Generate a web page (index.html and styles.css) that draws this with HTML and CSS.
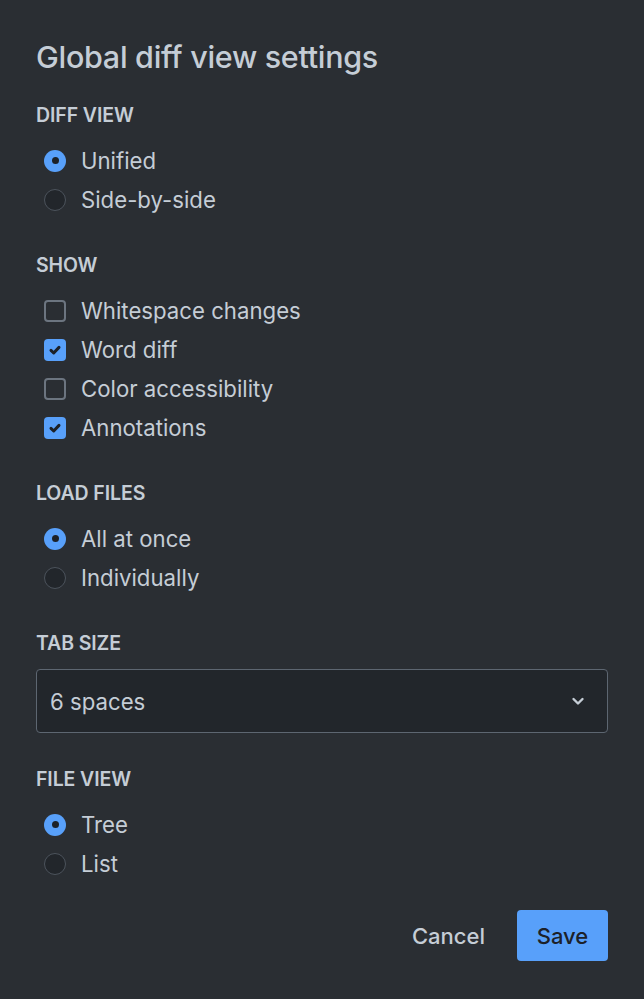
FILE: index.html
```html
<!DOCTYPE html>
<html>
<head>
<meta charset="utf-8">
<link rel="stylesheet" href="styles.css">
</head>
<body>
<div class="dialog">
  <h1 class="title">Global diff view settings</h1>

  <section class="section">
    <div class="label">DIFF VIEW</div>
    <div class="row"><span class="radio on"></span><span class="text">Unified</span></div>
    <div class="row"><span class="radio"></span><span class="text">Side-by-side</span></div>
  </section>

  <section class="section">
    <div class="label">SHOW</div>
    <div class="row"><span class="check"></span><span class="text">Whitespace changes</span></div>
    <div class="row"><span class="check on"><svg viewBox="0 0 16 16" width="16" height="16"><path d="M4 8.4l2.7 2.6 5.3-5.6" fill="none" stroke="#1c2128" stroke-width="3" stroke-linecap="round" stroke-linejoin="round"/></svg></span><span class="text">Word diff</span></div>
    <div class="row"><span class="check"></span><span class="text">Color accessibility</span></div>
    <div class="row"><span class="check on"><svg viewBox="0 0 16 16" width="16" height="16"><path d="M4 8.4l2.7 2.6 5.3-5.6" fill="none" stroke="#1c2128" stroke-width="3" stroke-linecap="round" stroke-linejoin="round"/></svg></span><span class="text">Annotations</span></div>
  </section>

  <section class="section">
    <div class="label">LOAD FILES</div>
    <div class="row"><span class="radio on"></span><span class="text">All at once</span></div>
    <div class="row"><span class="radio"></span><span class="text">Individually</span></div>
  </section>

  <section class="section">
    <div class="label">TAB SIZE</div>
    <div class="select">
      <span class="text">6 spaces</span>
      <svg class="chev" viewBox="0 0 16 16" width="16" height="16"><path d="M3.5 6l4.5 4.5 4.5-4.5" fill="none" stroke="#c5cdd6" stroke-width="2.4" stroke-linecap="round" stroke-linejoin="round"/></svg>
    </div>
  </section>

  <section class="section">
    <div class="label">FILE VIEW</div>
    <div class="row"><span class="radio on"></span><span class="text">Tree</span></div>
    <div class="row"><span class="radio"></span><span class="text">List</span></div>
  </section>

  <div class="actions">
    <button class="btn cancel">Cancel</button>
    <button class="btn save">Save</button>
  </div>
</div>
</body>
</html>
```

FILE: styles.css
```css
html, body {
  margin: 0;
  padding: 0;
  background: #2a2e33;
}
body {
  font-family: Inter, "Noto Sans", "Liberation Sans", sans-serif;
  color: #c5cdd6;
}
.dialog {
  padding: 38px 36px 0 36px;
  display: flex;
  flex-direction: column;
}
.title {
  margin: 0;
  font-size: 30.5px;
  line-height: 38px;
  font-weight: 500;
  letter-spacing: -0.3px;
  color: #c5cdd6;
}
.section {
  display: flex;
  flex-direction: column;
  margin-top: 27px;
}
.section + .section {
  margin-top: 34px;
}
.label {
  font-size: 19.5px;
  line-height: 24px;
  font-weight: 600;
  color: #c5cdd6;
  margin-bottom: 14px;
  letter-spacing: -0.1px;
}
.row {
  height: 39px;
  display: flex;
  align-items: center;
  gap: 15px;
  padding-left: 8px;
}
.text {
  font-size: 22.2px;
  line-height: 26px;
  padding-top: 1px;
  color: #c5cdd6;
}
.radio {
  width: 22px;
  height: 22px;
  box-sizing: border-box;
  border-radius: 50%;
  border: 1px solid #4c535c;
  background: #22262b;
  flex: none;
  display: flex;
  align-items: center;
  justify-content: center;
}
.radio.on {
  border: none;
  background: #58a0fa;
}
.radio.on::after {
  content: "";
  width: 7px;
  height: 7px;
  border-radius: 50%;
  background: #1c2128;
}
.check {
  width: 22px;
  height: 22px;
  box-sizing: border-box;
  border-radius: 4px;
  border: 2px solid #6c7580;
  background: #2a2e33;
  flex: none;
  display: flex;
  align-items: center;
  justify-content: center;
}
.check.on {
  border: none;
  background: #58a0fa;
}
.select {
  height: 64px;
  box-sizing: border-box;
  border: 1px solid #5d6671;
  border-radius: 4px;
  background: #22262b;
  display: flex;
  align-items: center;
  justify-content: space-between;
  padding: 0 21px 0 13px;
}
.chev {
  flex: none;
}
.actions {
  display: flex;
  justify-content: flex-end;
  align-items: center;
  gap: 32px;
  margin-top: 27px;
}
.btn {
  font-family: inherit;
  font-size: 22px;
  font-weight: 500;
  border: none;
  cursor: pointer;
}
.cancel {
  background: transparent;
  color: #c5cdd6;
  padding: 0;
}
.save {
  background: #58a0fa;
  color: #1c2128;
  width: 91px;
  height: 51px;
  border-radius: 4px;
  padding: 0;
}
```
